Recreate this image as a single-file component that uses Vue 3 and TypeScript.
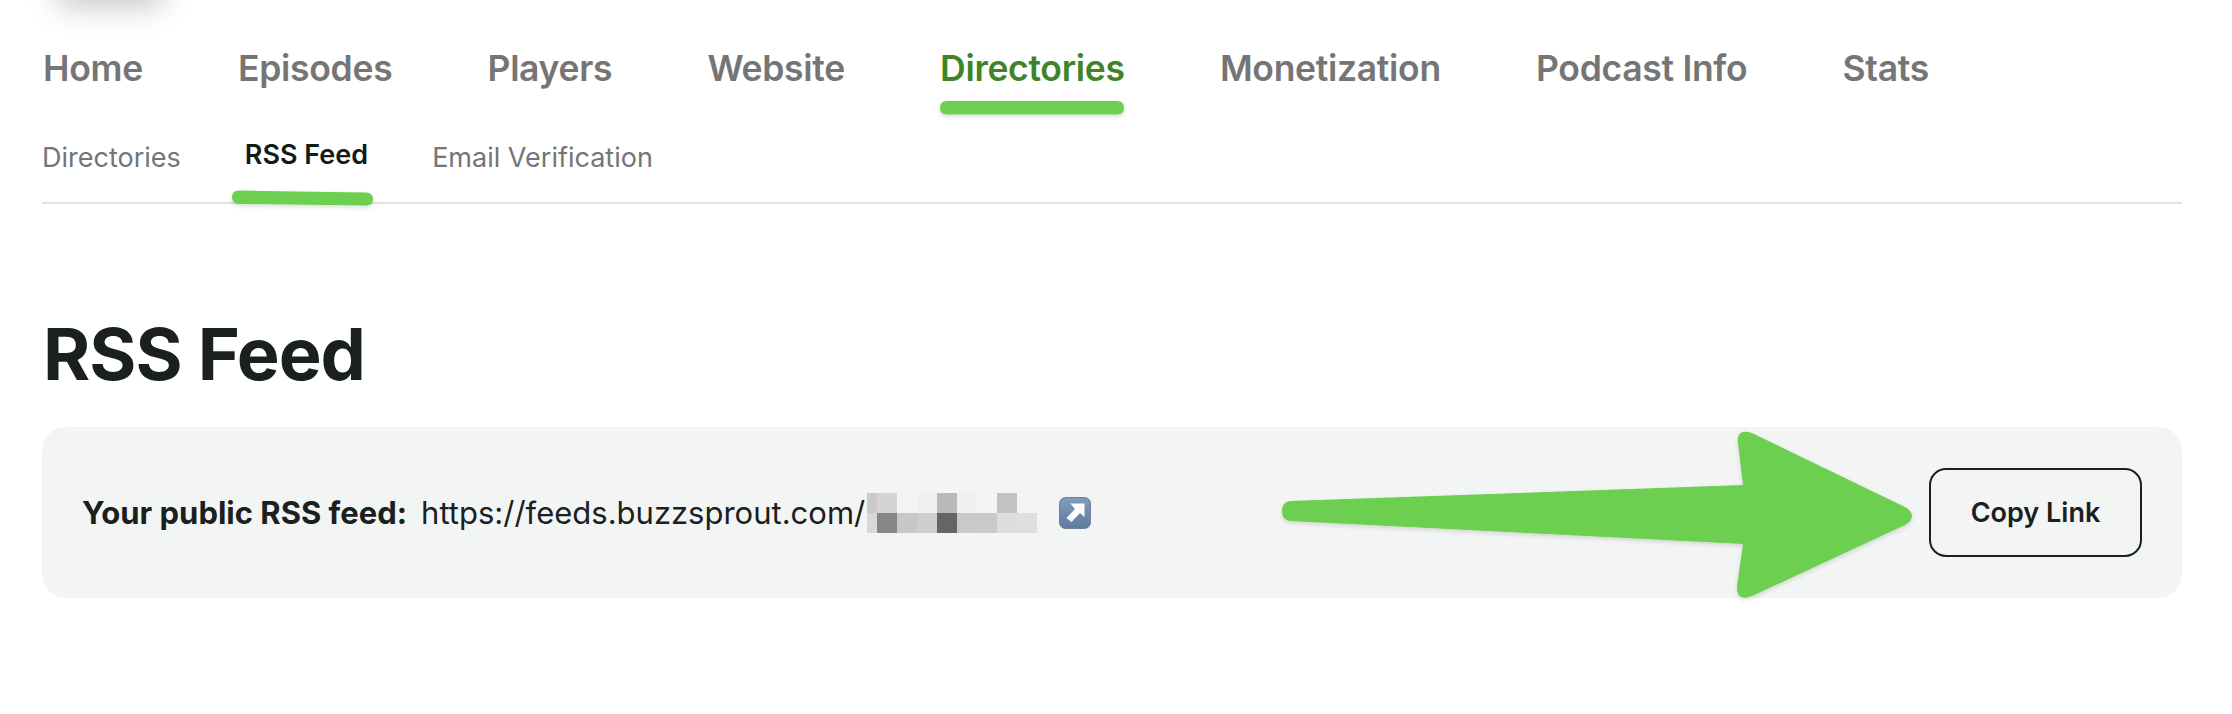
<script setup lang="ts">
const mainTabs: string[] = ['Home', 'Episodes', 'Players', 'Website', 'Directories', 'Monetization', 'Podcast Info', 'Stats']
const subTabs: string[] = ['Directories', 'RSS Feed', 'Email Verification']
const topRow: string[] = ['#c8c9c8', '#d3d4d3', '#f3f4f4', '#eeefef', '#b8b9b8', '#eff0f0', '#f3f4f4', '#c2c3c2', 'transparent']
const bottomRow: string[] = ['#d7d8d7', '#868786', '#c7c8c7', '#cdcecd', '#646564', '#c8c9c8', '#c9cac9', '#dcdddc', '#dedfde']
</script>

<template>
  <div class="page">
    <div class="top-shadow"></div>
    <nav class="main-nav">
      <a v-for="t in mainTabs" :key="t" class="main-tab" :class="{ active: t === 'Directories' }">{{ t }}</a>
    </nav>
    <nav class="sub-nav">
      <a v-for="t in subTabs" :key="t" class="sub-tab" :class="{ active: t === 'RSS Feed' }">{{ t }}</a>
    </nav>
    <h1 class="title">RSS Feed</h1>
    <section class="card">
      <div class="feed">
        <strong class="label">Your public RSS feed:</strong>
        <span class="url">https://feeds.buzzsprout.com/</span>
        <span class="pixels">
          <span class="pixel-row">
            <i v-for="(c, i) in topRow" :key="i" class="cell" :style="{ background: c }"></i>
          </span>
          <span class="pixel-row">
            <i v-for="(c, i) in bottomRow" :key="i" class="cell" :style="{ background: c }"></i>
          </span>
        </span>
        <svg class="emoji" width="32" height="32" viewBox="0 0 32 32">
          <defs>
            <linearGradient id="emojiFill" x1="0" y1="0" x2="0" y2="1">
              <stop offset="0" stop-color="#819bbb" />
              <stop offset="1" stop-color="#5e7a9f" />
            </linearGradient>
          </defs>
          <rect x="0.5" y="0.5" width="31" height="31" rx="6" fill="url(#emojiFill)" stroke="#6d7f97" />
          <path d="M11.500 6.500H25.500V20L21 16L12.500 25L7.500 21L16 12Z" fill="#fff" />
        </svg>
      </div>
      <button class="copy">Copy Link</button>
    </section>
    <svg class="marks" width="2232" height="714" viewBox="0 0 2232 714">
      <defs>
        <filter id="markShadow" x="-5%" y="-30%" width="110%" height="170%">
          <feDropShadow dx="0" dy="2" stdDeviation="2" flood-color="#000" flood-opacity="0.14" />
        </filter>
      </defs>
      <g fill="#6dcf50" filter="url(#markShadow)">
        <path d="M947 101H1117Q1124 101 1124 108Q1124 114.500 1117 114.500H947Q940 114.500 940 108Q940 101 947 101Z" />
        <path d="M239 190.500L366 192.500Q373 193 373 199Q373 205.500 366 205.500L239 204Q232 203.500 232 197Q232 190.500 239 190.500Z" />
        <path d="M1290 501L1743 485L1738 443Q1736 428 1752 433L1905 507Q1912 511 1912 516Q1912 521 1905 525L1752 596Q1736 602 1737 586L1743 544L1290 521Q1282 520 1282 511Q1282 502 1290 501Z" />
      </g>
    </svg>
  </div>
</template>

<style scoped>
.page {
  position: relative;
  width: 2232px;
  height: 714px;
  overflow: hidden;
  box-sizing: border-box;
  padding: 42px 50px 0 42px;
  background: #fff;
  font-family: Inter, "Liberation Sans", sans-serif;
  color: #1a201e;
}
.top-shadow {
  position: absolute;
  left: 55px;
  top: -30px;
  width: 110px;
  height: 30px;
  border-radius: 14px;
  box-shadow: 0 6px 30px rgba(0, 0, 0, 0.24);
}
.main-nav {
  display: flex;
  justify-content: space-between;
  width: 1886px;
  height: 52px;
  align-items: center;
  padding-left: 1px;
}
.main-tab {
  font-size: 35.500px;
  font-weight: 600;
  letter-spacing: -0.3px;
  color: #757575;
  white-space: nowrap;
}
.main-tab.active {
  color: #3f8527;
}
.sub-nav {
  display: flex;
  gap: 64px;
  align-items: center;
  height: 110px;
  box-sizing: border-box;
  padding: 19px 0 0 0;
  border-bottom: 2px solid #e2e2e2;
}
.sub-tab {
  font-size: 27px;
  color: #757575;
  white-space: nowrap;
}
.sub-tab.active {
  color: #141a18;
  font-weight: 600;
  margin-top: -6px;
}
.title {
  margin: 107px 0 0;
  padding-left: 1px;
  font-size: 72px;
  line-height: 86px;
  font-weight: 700;
  letter-spacing: -1px;
  color: #1a201e;
}
.card {
  margin-top: 30px;
  height: 171px;
  box-sizing: border-box;
  padding: 0 40px 0 40px;
  border-radius: 24px;
  background: #f3f5f5;
  display: flex;
  align-items: center;
  justify-content: space-between;
}
.feed {
  display: flex;
  align-items: center;
}
.label {
  font-size: 31px;
  font-weight: 700;
  color: #1a201e;
  white-space: nowrap;
}
.url {
  margin-left: 14px;
  font-size: 31px;
  color: #1a201e;
  white-space: nowrap;
}
.pixels {
  display: flex;
  flex-direction: column;
  width: 170px;
  margin-left: 2px;
}
.pixel-row {
  display: flex;
}
.cell {
  display: block;
  width: 20px;
  height: 20px;
}
.cell:first-child {
  width: 10px;
}
.emoji {
  margin-left: 22px;
}
.copy {
  width: 213px;
  height: 89px;
  box-sizing: border-box;
  border: 2px solid #1a201e;
  border-radius: 17px;
  background: transparent;
  font-family: inherit;
  font-size: 27px;
  font-weight: 600;
  color: #1a201e;
}
.marks {
  position: absolute;
  left: 0;
  top: 0;
  pointer-events: none;
}
</style>
